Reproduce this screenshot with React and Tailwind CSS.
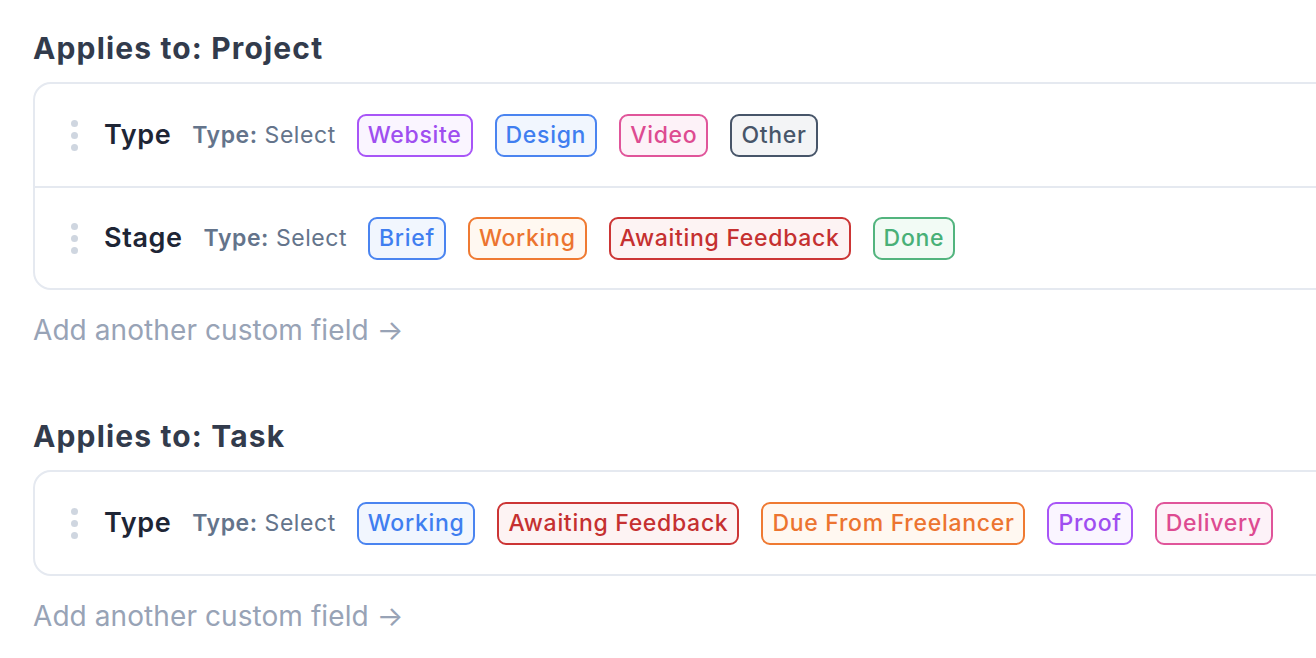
import React from "react";

const styles = {
  purple: "border-[#a855f7] text-[#9f4ef0] bg-[#faf5ff]",
  blue: "border-[#4a84f0] text-[#3f7ef0] bg-[#f1f6fe]",
  pink: "border-[#e0559a] text-[#dd4b91] bg-[#fdf2f8]",
  gray: "border-[#475569] text-[#475569] bg-[#f3f4f6]",
  orange: "border-[#ef7a32] text-[#ec7430] bg-[#fff8f1]",
  red: "border-[#cc3535] text-[#c53030] bg-[#fdf3f3]",
  green: "border-[#52b47e] text-[#48b077] bg-[#f2fbf5]",
};

function Badge({ color, children }) {
  return (
    <span
      className={`inline-flex items-center h-[43px] px-[9px] rounded-[9px] border-2 text-[23px] tracking-[0.7px] font-medium leading-none ${styles[color]}`}
    >
      {children}
    </span>
  );
}

function Dots() {
  return (
    <div className="flex flex-col gap-[5px] w-[7px]">
      <span className="block w-[7px] h-[7px] rounded-full bg-[#cfd6e0]" />
      <span className="block w-[7px] h-[7px] rounded-full bg-[#cfd6e0]" />
      <span className="block w-[7px] h-[7px] rounded-full bg-[#cfd6e0]" />
    </div>
  );
}

function Row({ label, badges, border }) {
  return (
    <div
      className={`flex items-center h-[102px] pl-[36px] ${border ? "border-t-2 border-[#e5e9f0]" : ""}`}
    >
      <Dots />
      <span className="ml-[26px] text-[27px] tracking-[0.6px] font-semibold text-[#1e2535]">{label}</span>
      <span className="ml-[21px] text-[23px] tracking-[0.55px] text-[#64748b]">
        <span className="font-semibold">Type:</span> Select
      </span>
      <div className="ml-[21px] flex items-center gap-[22px]">
        {badges.map(([t, c]) => (
          <Badge key={t} color={c}>
            {t}
          </Badge>
        ))}
      </div>
    </div>
  );
}

function Section({ title, rows }) {
  return (
    <section>
      <h2 className="text-[30px] leading-[34px] tracking-[1.15px] font-bold text-[#323b4c]">{title}</h2>
      <div className="mt-[17px] w-[1340px] rounded-[18px] border-2 border-[#e5e9f0] bg-white">
        {rows.map((r, i) => (
          <Row key={i} label={r.label} badges={r.badges} border={i > 0} />
        ))}
      </div>
      <div className="mt-[24px] text-[28px] leading-[32px] tracking-[0.08px] text-[#98a3b6]">
        Add another custom field →
      </div>
    </section>
  );
}

export default function App() {
  return (
    <div
      className="w-[1316px] h-[658px] overflow-hidden bg-white pl-[33px] pt-[31px]"
      style={{ fontFamily: "Inter, 'Noto Sans', sans-serif" }}
    >
      <div className="flex flex-col gap-[73px]">
        <Section
          title="Applies to: Project"
          rows={[
            {
              label: "Type",
              badges: [
                ["Website", "purple"],
                ["Design", "blue"],
                ["Video", "pink"],
                ["Other", "gray"],
              ],
            },
            {
              label: "Stage",
              badges: [
                ["Brief", "blue"],
                ["Working", "orange"],
                ["Awaiting Feedback", "red"],
                ["Done", "green"],
              ],
            },
          ]}
        />
        <Section
          title="Applies to: Task"
          rows={[
            {
              label: "Type",
              badges: [
                ["Working", "blue"],
                ["Awaiting Feedback", "red"],
                ["Due From Freelancer", "orange"],
                ["Proof", "purple"],
                ["Delivery", "pink"],
              ],
            },
          ]}
        />
      </div>
    </div>
  );
}
